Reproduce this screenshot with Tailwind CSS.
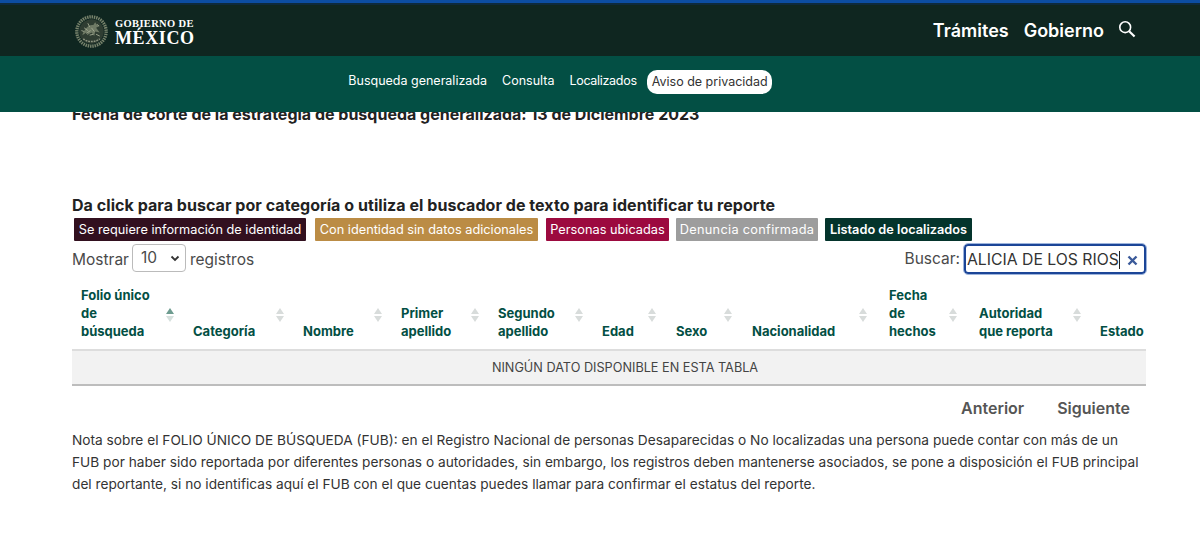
<!DOCTYPE html>
<html lang="es">
<head>
<meta charset="utf-8">
<script src="https://cdn.jsdelivr.net/npm/@tailwindcss/browser@4"></script>
</head>
<body class="bg-white font-['Inter','Liberation_Sans',sans-serif] text-[#4a4a4a] h-[539px] overflow-hidden">
<header class="relative z-10">
  <div class="h-[3px] bg-[#0c4da2]"></div>
  <div class="h-[2px] bg-[#0e2a3c]"></div>
  <div class="h-[51px] bg-[#0f2620] flex items-center pl-[75px] pr-[64px]">
    <svg width="33" height="33" viewBox="0 0 36 36" class="shrink-0 mt-[2px]">
      <circle cx="18" cy="18" r="16" fill="none" stroke="#78836c" stroke-width="3.6" stroke-dasharray="1.6 0.9"/>
      <circle cx="18" cy="18" r="13.4" fill="#2f3d32"/>
      <path d="M8 22c2-7 7-12 12-11l2-3 2 3 3 1-4 2 4 5-5-1-1 5-3-4-5 3 1-4z" fill="#6f7a65"/>
      <path d="M10 14l4 3M27 23l-4-2M14 9l2 4M12 20l5-3M18 14l3 4M16 22l4-1M7 17l3 1M24 10l2 2" stroke="#a2aa92" stroke-width="1"/>
      <path d="M9 26c5 4 13 4 18 0" fill="none" stroke="#8d9581" stroke-width="1.6" stroke-dasharray="2 1"/>
    </svg>
    <div class="ml-[7px] mt-[2px] text-white font-['Liberation_Serif',serif] font-bold leading-none">
      <div class="text-[10.5px] tracking-[0.35px] leading-[13px]">GOBIERNO DE</div>
      <div class="text-[18px] tracking-[0.6px] leading-[16px]">MÉXICO</div>
    </div>
    <nav class="ml-auto flex items-center text-white font-semibold text-[18px]">
      <a class="mr-[15px]">Trámites</a>
      <a class="mr-[14px]">Gobierno</a>
      <svg width="18" height="18" viewBox="0 0 20 20" fill="none" stroke="white" stroke-width="1.8" class="mb-[3px]">
        <circle cx="8" cy="8" r="6"/><path d="M12.4 12.4 18.4 18.4" stroke-width="2.4"/>
      </svg>
    </nav>
  </div>
  <div class="h-[56px] bg-[#034f44] flex items-center justify-center gap-[5px] text-[12.5px] text-white pb-[5px] pr-[85px]">
    <a class="px-[5px]">Busqueda generalizada</a>
    <a class="px-[5px]">Consulta</a>
    <a class="px-[5px] tracking-[-0.3px]">Localizados</a>
    <a class="pl-[5px] pr-[4px] h-[24px] leading-[24px] bg-white text-[#333] rounded-[10px]">Aviso de privacidad</a>
  </div>
</header>
<main class="pl-[72px] pr-[54px]">
  <p class="-mt-[6px] h-[17px] text-[16px] font-bold leading-[17px] text-[#222]">Fecha de corte de la estrategia de búsqueda generalizada: 13 de Diciembre 2023</p>
  <h2 class="mt-[72px] text-[16px] tracking-[0.05px] font-bold leading-[20px] text-[#222]">Da click para buscar por categoría o utiliza el buscador de texto para identificar tu reporte</h2>
  <div class="mt-[3px] ml-[2px] flex gap-[8px] text-[12.75px] text-white leading-[23px] text-center whitespace-nowrap">
    <a class="w-[232px] h-[23px] rounded-[1px] bg-[#32101f]">Se requiere información de identidad</a>
    <a class="w-[223px] h-[23px] ml-[1px] rounded-[1px] bg-[#bb8c45]">Con identidad sin datos adicionales</a>
    <a class="w-[123px] h-[23px] rounded-[1px] bg-[#9c0a3f]">Personas ubicadas</a>
    <a class="w-[142px] h-[23px] -ml-[1px] rounded-[1px] bg-[#9d9d9d] tracking-[0.3px]">Denuncia confirmada</a>
    <a class="w-[147px] h-[23px] -ml-[1px] rounded-[1px] bg-[#04342c] font-semibold">Listado de localizados</a>
  </div>
  <div class="flex justify-between text-[15.5px] h-[36px]">
    <div class="flex items-start pt-[3px]">
      <span class="mt-[4px]">Mostrar</span>
      <div class="ml-[3px] w-[54px] h-[28px] border border-[#bbb] rounded-[4px] flex items-center justify-between pl-[8px] pr-[4px]">
        <span>10</span>
        <svg width="12" height="12" viewBox="0 0 12 12" fill="none" stroke="#333" stroke-width="1.8"><path d="M2.5 4.5 6 8l3.5-3.5"/></svg>
      </div>
      <span class="ml-[4px] mt-[4px]">registros</span>
    </div>
    <div class="flex items-start">
      <span class="mt-[6px] mr-[4px]">Buscar:</span>
      <div class="mt-[3px] w-[182px] h-[30px] border-2 border-[#1b4597] rounded-[4px] flex items-center pl-[1px] pr-[5px] text-[15.75px] text-[#333] outline outline-[#9db4dc]">
        <span class="mt-[1px] border-r border-[#222] leading-[18px] whitespace-nowrap">ALICIA DE LOS RIOS</span>
        <svg width="11" height="11" viewBox="0 0 11 11" stroke="#3b5a9a" stroke-width="2.4" class="ml-auto mr-[1px] mt-[2px]"><path d="M1.5 1.5l8 8M9.5 1.5l-8 8"/></svg>
      </div>
    </div>
  </div>
  <table class="mt-[7px] w-[1074px] table-fixed border-collapse text-[#034f44] text-[13px] font-bold leading-[18px]">
    <thead>
      <tr class="h-[66px] border-b-2 border-[#ddd] align-bottom text-left">
        <th class="w-[112px] pl-[9px] pb-[9px] relative">Folio único<br>de<br>búsqueda<span class="absolute right-[10px] top-[24px]"><svg width="8" height="14" viewBox="0 0 8 14"><path d="M4 0 8 6H0z" fill="#6e9c90"/><path d="M4 14 0 8h8z" fill="#d5e0dd"/></svg></span></th>
        <th class="w-[110px] pl-[9px] pb-[9px] relative">Categoría<span class="absolute right-[10px] top-[24px]"><svg width="8" height="14" viewBox="0 0 8 14" fill="#d8dcdb"><path d="M4 0 8 6H0z"/><path d="M4 14 0 8h8z"/></svg></span></th>
        <th class="w-[98px] pl-[9px] pb-[9px] relative">Nombre<span class="absolute right-[10px] top-[24px]"><svg width="8" height="14" viewBox="0 0 8 14" fill="#d8dcdb"><path d="M4 0 8 6H0z"/><path d="M4 14 0 8h8z"/></svg></span></th>
        <th class="w-[97px] pl-[9px] pb-[9px] relative">Primer<br>apellido<span class="absolute right-[10px] top-[24px]"><svg width="8" height="14" viewBox="0 0 8 14" fill="#d8dcdb"><path d="M4 0 8 6H0z"/><path d="M4 14 0 8h8z"/></svg></span></th>
        <th class="w-[104px] pl-[9px] pb-[9px] relative">Segundo<br>apellido<span class="absolute right-[10px] top-[24px]"><svg width="8" height="14" viewBox="0 0 8 14" fill="#d8dcdb"><path d="M4 0 8 6H0z"/><path d="M4 14 0 8h8z"/></svg></span></th>
        <th class="w-[74px] pl-[9px] pb-[9px] relative">Edad<span class="absolute right-[11px] top-[24px]"><svg width="8" height="14" viewBox="0 0 8 14" fill="#d8dcdb"><path d="M4 0 8 6H0z"/><path d="M4 14 0 8h8z"/></svg></span></th>
        <th class="w-[76px] pl-[9px] pb-[9px] relative">Sexo<span class="absolute right-[11px] top-[24px]"><svg width="8" height="14" viewBox="0 0 8 14" fill="#d8dcdb"><path d="M4 0 8 6H0z"/><path d="M4 14 0 8h8z"/></svg></span></th>
        <th class="w-[137px] pl-[9px] pb-[9px] relative">Nacionalidad<span class="absolute right-[13px] top-[24px]"><svg width="8" height="14" viewBox="0 0 8 14" fill="#d8dcdb"><path d="M4 0 8 6H0z"/><path d="M4 14 0 8h8z"/></svg></span></th>
        <th class="w-[90px] pl-[9px] pb-[9px] relative">Fecha<br>de<br>hechos<span class="absolute right-[13px] top-[24px]"><svg width="8" height="14" viewBox="0 0 8 14" fill="#d8dcdb"><path d="M4 0 8 6H0z"/><path d="M4 14 0 8h8z"/></svg></span></th>
        <th class="w-[121px] pl-[9px] pb-[9px] relative">Autoridad<br>que reporta<span class="absolute right-[10px] top-[24px]"><svg width="8" height="14" viewBox="0 0 8 14" fill="#d8dcdb"><path d="M4 0 8 6H0z"/><path d="M4 14 0 8h8z"/></svg></span></th>
        <th class="pl-[9px] pb-[9px]">Estado</th>
      </tr>
    </thead>
    <tbody>
      <tr class="h-[35px] bg-[#f2f2f2] border-b-2 border-[#bdbdbd]">
        <td colspan="11" class="pl-[32px] text-center text-[12.7px] font-normal text-[#444]">NINGÚN DATO DISPONIBLE EN ESTA TABLA</td>
      </tr>
    </tbody>
  </table>
  <div class="mt-[12px] w-[1058px] flex justify-end gap-[33px] text-[16px] font-semibold text-[#555] leading-[20px]">
    <a>Anterior</a><a>Siguiente</a>
  </div>
  <p class="mt-[11px] w-[1074px] text-[13.7px] leading-[22px] text-[#333]">Nota sobre el FOLIO ÚNICO DE BÚSQUEDA (FUB): en el Registro Nacional de personas Desaparecidas o No localizadas una persona puede contar con más de un FUB por haber sido reportada por diferentes personas o autoridades, sin embargo, los registros deben mantenerse asociados, se pone a disposición el FUB principal del reportante, si no identificas aquí el FUB con el que cuentas puedes llamar para confirmar el estatus del reporte.</p>
</main>
</body>
</html>
